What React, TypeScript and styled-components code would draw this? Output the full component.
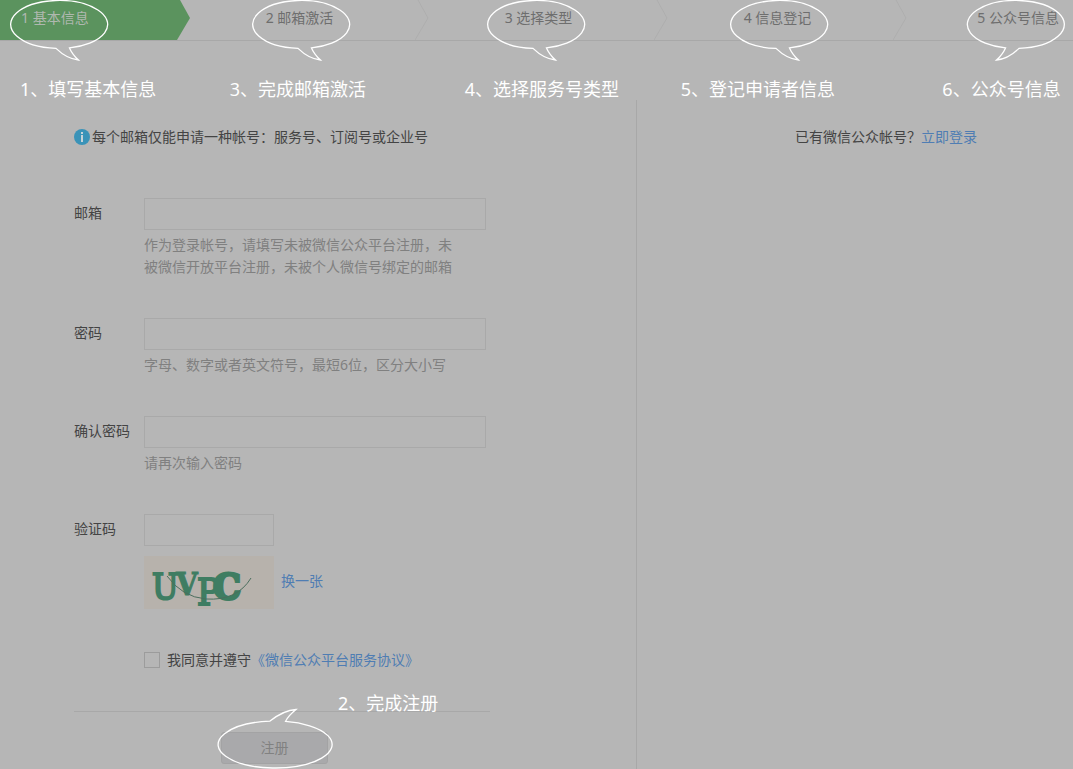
import React from 'react';
import styled, { createGlobalStyle, css } from 'styled-components';

const color = {
  page: '#b6b6b6',
  line: '#a8a8a8',
  chevron: '#aeaeae',
  field: '#a9a9a9',
  text: '#444',
  step: '#6e6e6e',
  hint: '#808080',
  link: '#4f7db3',
  green: '#5b935e',
  info: '#3a93b8',
};

const GlobalStyle = createGlobalStyle`
  *, *::before, *::after { box-sizing: border-box; }
  body {
    margin: 0;
    background: ${color.page};
    color: ${color.text};
    font: 14px/22px 'Noto Sans', 'Noto Sans CJK SC', sans-serif;
  }
  button, input { font: inherit; }
`;

const Page = styled.div`
  display: flex;
  flex-direction: column;
  min-height: 100vh;
  overflow-x: hidden;
`;

const Steps = styled.ol`
  display: grid;
  grid-template-columns: 190fr 239fr 239fr 239fr 166fr;
  height: 41px;
  margin: 0 0 59px;
  padding: 0;
  list-style: none;
  border-bottom: 1px solid ${color.line};
`;

type Align = 'start' | 'center' | 'end';

const Step = styled.li<{ $align: Align; $active?: boolean }>`
  position: relative;
  display: flex;
  justify-content: ${({ $align }) => $align};
  padding: ${({ $align }) =>
    $align === 'start' ? '7px 0 0 21px' : $align === 'end' ? '7px 14px 0 0' : '7px 20px 0 0'};
  color: ${({ $active }) => ($active ? '#b0b8b0' : color.step)};
  ${({ $active }) =>
    $active &&
    css`
      &::before {
        content: '';
        position: absolute;
        inset: 0;
        background: ${color.green};
        clip-path: polygon(0 0, calc(100% - 10px) 0, 100% 18px, calc(100% - 13px) 100%, 0 100%);
      }
    `}
`;

const StepName = styled.span`
  position: relative;
  white-space: nowrap;
`;

const ChevronSvg = styled.svg`
  position: absolute;
  top: 0;
  right: 0;
`;

const Bubble = styled.svg<{ $x: number; $y: number; $flip?: boolean }>`
  position: absolute;
  left: ${({ $x }) => $x}px;
  top: ${({ $y }) => $y}px;
  overflow: visible;
  pointer-events: none;
  transform: ${({ $flip }) => ($flip ? 'scaleX(-1)' : 'none')};
`;

const Note = styled.span<{ $x: number; $y: number }>`
  position: absolute;
  z-index: 1;
  left: ${({ $x }) => $x}px;
  top: ${({ $y }) => $y}px;
  color: #fff;
  font-size: 18px;
  line-height: 22px;
  white-space: nowrap;
`;

const Main = styled.main`
  display: grid;
  flex: 1;
  grid-template-columns: 637fr 436fr;
`;

const FormSide = styled.section`
  padding: 26px 0 4px 74px;
  border-right: 1px solid ${color.line};
`;

const LoginSide = styled.aside`
  padding: 26px 96px 0 0;
  text-align: right;
`;

const Notice = styled.p`
  display: flex;
  align-items: center;
  gap: 2px;
  margin: 0 0 50px;
`;

const Link = styled.a`
  color: ${color.link};
  text-decoration: none;
`;

const Form = styled.form`
  display: flex;
  flex-direction: column;
  gap: 40px;
  max-width: 416px;
`;

const Field = styled.div`
  display: grid;
  grid-template-columns: 70px 1fr;
`;

const Label = styled.label`
  padding-top: 4px;
`;

const Input = styled.input<{ $short?: boolean }>`
  display: block;
  width: ${({ $short }) => ($short ? '130px' : '342px')};
  height: 32px;
  padding: 0 8px;
  background: transparent;
  border: 1px solid ${color.field};
  border-radius: 0;
  color: ${color.text};
`;

const Hint = styled.p`
  max-width: 320px;
  margin: 4px 0 0;
  color: ${color.hint};
`;

const CaptchaRow = styled.div`
  display: flex;
  align-items: flex-start;
  gap: 7px;
  margin-top: 10px;
  line-height: 50px;
  height: 53px;
`;

const CaptchaSvg = styled.svg`
  display: block;
  overflow: visible;
  background: #b7b2ac;
`;

const Agreement = styled.div`
  display: flex;
  align-items: center;
  padding-left: 70px;
`;

const Checkbox = styled.input`
  appearance: none;
  width: 16px;
  height: 16px;
  margin: 0 7px 0 0;
  border: 1px solid #9c9c9c;
  &:checked { background: ${color.green}; }
`;

const Actions = styled.div`
  display: flex;
  padding: 20px 0 0 147px;
  border-top: 1px solid ${color.line};
`;

const SubmitWrap = styled.div`
  position: relative;
`;

const Submit = styled.button`
  display: block;
  width: 107px;
  height: 32px;
  padding: 0;
  background: #a9a9ab;
  border: 1px solid #a3a3a4;
  border-radius: 3px;
  color: #818181;
`;

const steps: {
  name: string;
  note: string;
  align: Align;
  bubbleX: number;
  noteX: number;
  flip?: boolean;
}[] = [
  { name: '1 基本信息', note: '1、填写基本信息', align: 'start', bubbleX: -11, noteX: -1 },
  { name: '2 邮箱激活', note: '3、完成邮箱激活', align: 'center', bubbleX: -14, noteX: -36 },
  { name: '3 选择类型', note: '4、选择服务号类型', align: 'center', bubbleX: -18, noteX: -40 },
  { name: '4 信息登记', note: '5、登记申请者信息', align: 'center', bubbleX: -14, noteX: -63 },
  { name: '5 公众号信息', note: '6、公众号信息', align: 'end', bubbleX: -10, noteX: -35, flip: true },
];

function Chevron() {
  return (
    <ChevronSvg width="14" height="40" fill="none" stroke={color.chevron} aria-hidden="true">
      <path d="M3 0L13 18L0 40" />
    </ChevronSvg>
  );
}

function InfoIcon() {
  return (
    <svg width="16" height="16" viewBox="0 0 16 16" aria-hidden="true">
      <circle cx="8" cy="8" r="8" fill={color.info} />
      <path d="M7 3h2v2H7zM7 6h2v7H7z" fill="#c6d3d8" />
    </svg>
  );
}

function Captcha() {
  return (
    <CaptchaSvg width="130" height="53" viewBox="0 0 130 53" role="img" aria-label="验证码">
      <text
        y="43"
        fill="#3f7d62"
        stroke="#3f7d62"
        fontFamily="'DejaVu Serif Condensed', 'DejaVu Serif', serif"
        fontSize="35"
      >
        <tspan x="8" strokeWidth="2">U</tspan>
        <tspan x="32" y="39" fontSize="31" fontWeight="700" strokeWidth="1">V</tspan>
        <tspan x="53" y="49" fontSize="38" strokeWidth="2">P</tspan>
        <tspan x="69" y="43" fontSize="35" fontWeight="700" strokeWidth="3" fontFamily="'DejaVu Serif', serif">C</tspan>
      </text>
      <path d="M23 20Q38 41 62 43Q93 45 107 22" fill="none" stroke="#4b6e5e" />
    </CaptchaSvg>
  );
}

export default function App() {
  return (
    <Page>
      <GlobalStyle />
      <Steps>
        {steps.map((s, i) => (
          <Step key={s.name} $align={s.align} $active={i === 0}>
            {i > 0 && i < steps.length - 1 && <Chevron />}
            <StepName>
              {s.name}
              <Bubble $x={s.bubbleX} $y={-7} $flip={s.flip} width="98" height="61" fill="none" stroke="#fff" strokeWidth="1.3" aria-hidden="true">
                <path d="M46 48.4Q57 59 68.5 60Q62 54 59.5 47.9A48.5 24 0 1 0 46 48.4Z" />
              </Bubble>
              <Note $x={s.noteX} $y={71}>{s.note}</Note>
            </StepName>
          </Step>
        ))}
      </Steps>
      <Main>
        <FormSide>
          <Notice>
            <InfoIcon />
            每个邮箱仅能申请一种帐号：服务号、订阅号或企业号
          </Notice>
          <Form onSubmit={(e) => e.preventDefault()}>
            <Field>
              <Label htmlFor="email">邮箱</Label>
              <div>
                <Input id="email" type="email" />
                <Hint>作为登录帐号，请填写未被微信公众平台注册，未被微信开放平台注册，未被个人微信号绑定的邮箱</Hint>
              </div>
            </Field>
            <Field>
              <Label htmlFor="password">密码</Label>
              <div>
                <Input id="password" type="password" />
                <Hint>字母、数字或者英文符号，最短6位，区分大小写</Hint>
              </div>
            </Field>
            <Field>
              <Label htmlFor="confirm">确认密码</Label>
              <div>
                <Input id="confirm" type="password" />
                <Hint>请再次输入密码</Hint>
              </div>
            </Field>
            <Field>
              <Label htmlFor="captcha">验证码</Label>
              <div>
                <Input id="captcha" type="text" $short />
                <CaptchaRow>
                  <Captcha />
                  <Link href="#captcha">换一张</Link>
                </CaptchaRow>
              </div>
            </Field>
            <Agreement>
              <Checkbox id="agree" type="checkbox" />
              <label htmlFor="agree">我同意并遵守</label>
              <Link href="#agreement">《微信公众平台服务协议》</Link>
            </Agreement>
            <Actions>
              <SubmitWrap>
                <Submit type="submit">注册</Submit>
                <Bubble $x={-5} $y={-23} width="115" height="60" fill="none" stroke="#fff" strokeWidth="1.3" aria-hidden="true">
                  <path d="M54 12.1Q68 1 80 0.5Q72 7 69.5 12.4A57 23.5 0 1 1 54 12.1Z" />
                </Bubble>
                <Note $x={117} $y={-40}>2、完成注册</Note>
              </SubmitWrap>
            </Actions>
          </Form>
        </FormSide>
        <LoginSide>
          已有微信公众帐号？<Link href="#login">立即登录</Link>
        </LoginSide>
      </Main>
    </Page>
  );
}
